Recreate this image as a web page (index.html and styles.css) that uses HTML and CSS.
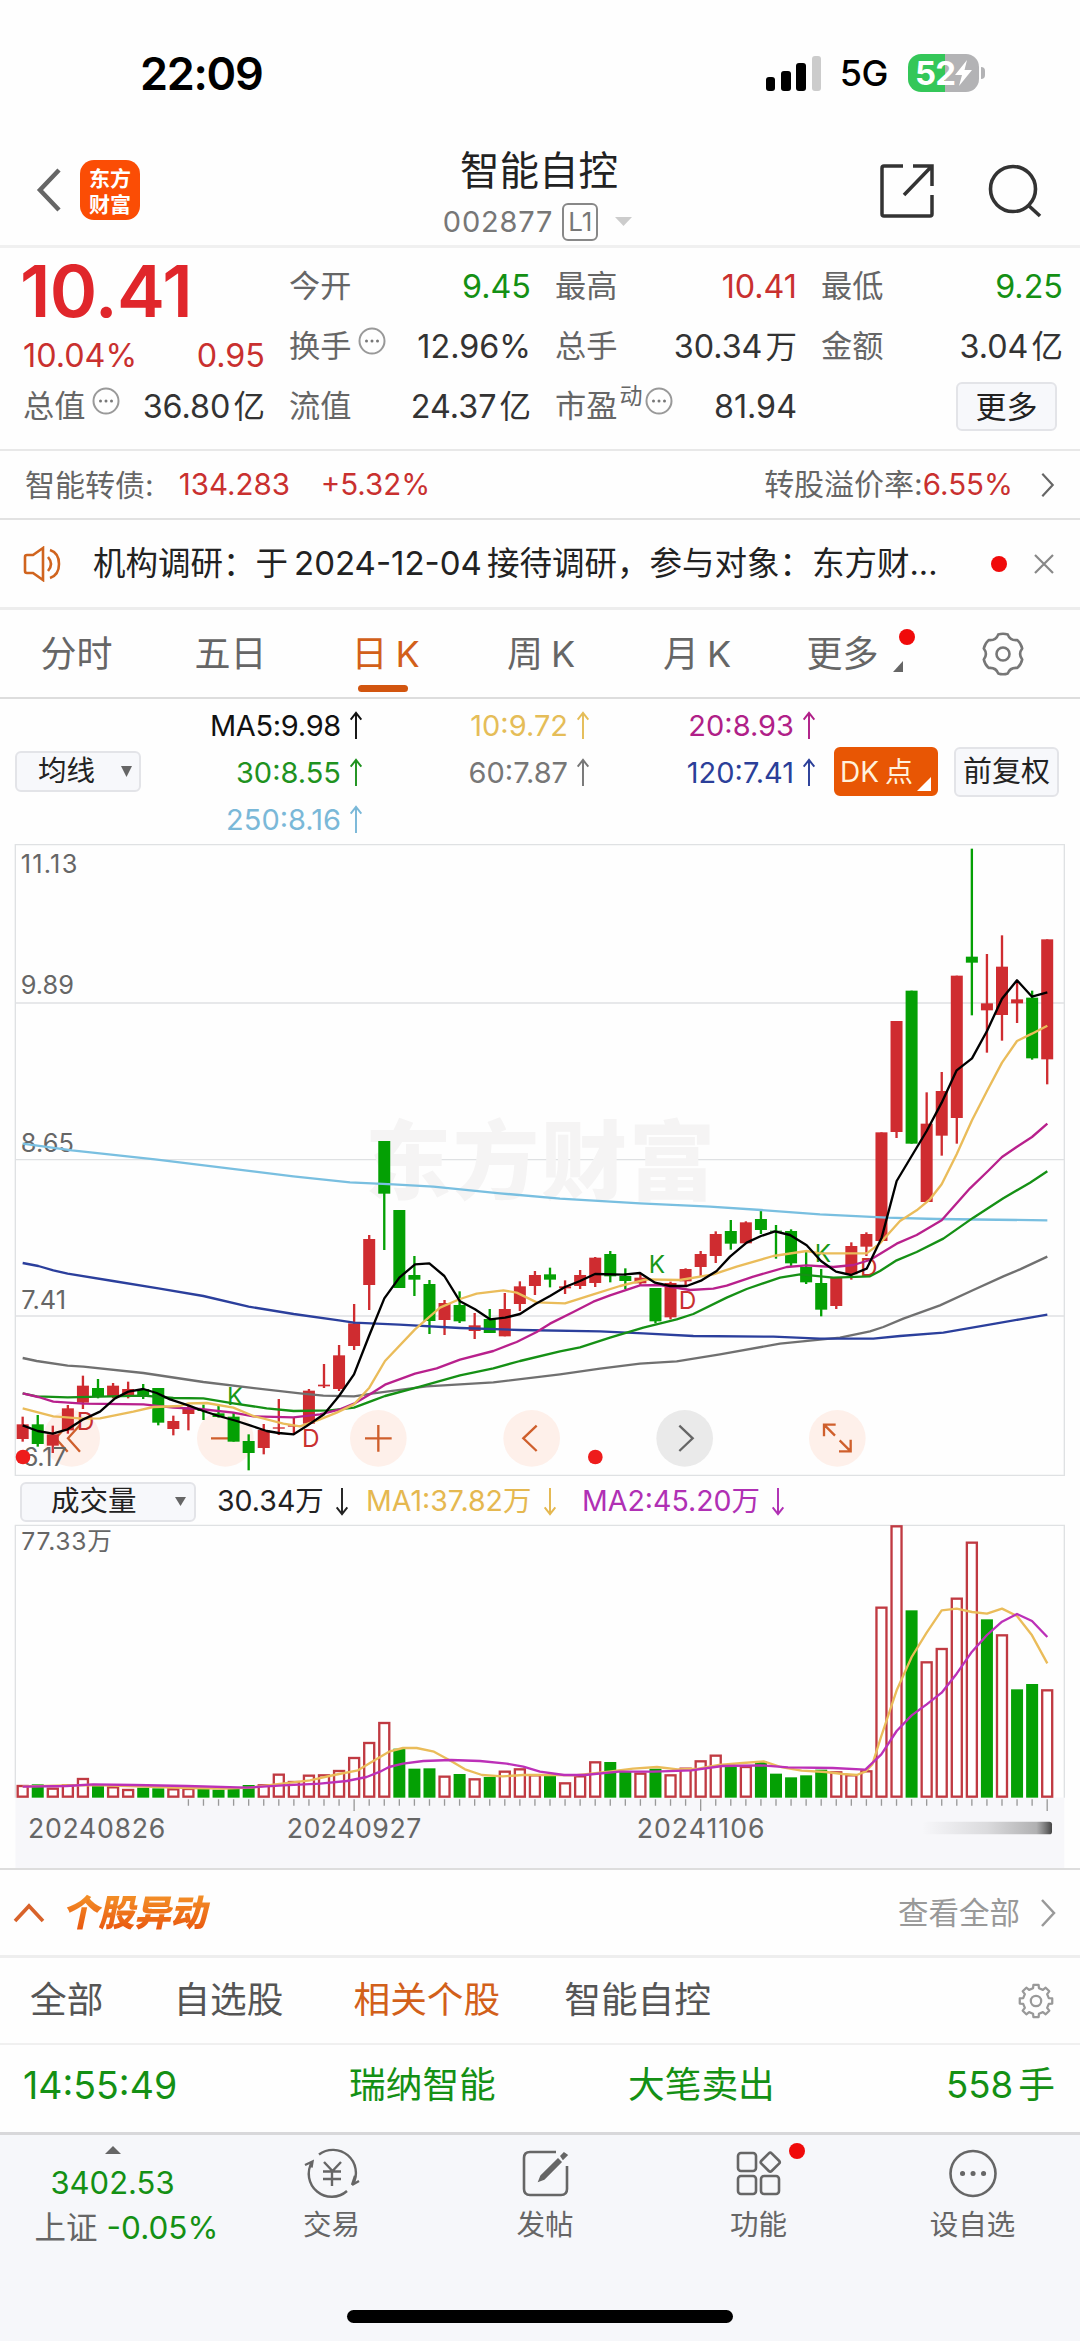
FILE: index.html
```html
<!DOCTYPE html>
<html lang="zh-CN">
<head>
<meta charset="utf-8">
<title>智能自控 002877</title>
<link rel="stylesheet" href="styles.css">
</head>
<body>
<svg class="defs" width="0" height="0">
  <symbol id="more" viewBox="0 0 28 28"><circle cx="14" cy="14" r="12.5" fill="none" stroke="#999" stroke-width="2"/><circle cx="8.5" cy="14" r="1.5" fill="#777"/><circle cx="14" cy="14" r="1.5" fill="#777"/><circle cx="19.500" cy="14" r="1.5" fill="#777"/></symbol>
  <symbol id="up" viewBox="0 0 14 30"><path d="M7 29V2M1.500 9L7 2l5.500 7" fill="none" stroke="currentColor" stroke-width="2"/></symbol>
  <symbol id="down" viewBox="0 0 14 30"><path d="M7 1v27M1.500 21L7 28l5.500-7" fill="none" stroke="currentColor" stroke-width="2"/></symbol>
  <symbol id="tri" viewBox="0 0 12 10"><path d="M0 0h12L6 10z" fill="currentColor"/></symbol>
  <symbol id="right" viewBox="0 0 16 30"><path d="M2 2l12 13L2 28" fill="none" stroke="currentColor" stroke-width="2.500"/></symbol>
  <symbol id="gear" viewBox="0 0 44 44"><g fill="none" stroke="currentColor" stroke-width="2.600" stroke-linejoin="round"><path d="M17.200 2.600Q22 1 26.800 2.600Q29 8.800 36.400 8.100Q40.200 11.500 41.200 16.500Q37 22 41.200 27.500Q40.200 32.500 36.400 35.900Q29 35.200 26.800 41.400Q22 43 17.200 41.400Q15 35.200 7.600 35.900Q3.800 32.500 2.800 27.500Q7 22 2.800 16.500Q3.800 11.500 7.600 8.100Q15 8.800 17.200 2.600z"/><circle cx="22" cy="22" r="6.500"/></g></symbol>
  <symbol id="cog" viewBox="0 0 44 44"><g fill="none" stroke="currentColor" stroke-width="2.600" stroke-linejoin="round"><path d="M40.800 25L36.800 25.400 34.900 30 37.400 33.200 33.200 37.400 30 34.900 25.400 36.800 25 40.800H19L18.600 36.800 14 34.900 10.800 37.400 6.600 33.200 9.100 30 7.200 25.400 3.200 25V19L7.200 18.600 9.100 14 6.600 10.800 10.800 6.600 14 9.100 18.600 7.200 19 3.200H25L25.400 7.200 30 9.100 33.200 6.600 37.400 10.800 34.900 14 36.800 18.600 40.800 19z"/><circle cx="22" cy="22" r="6"/></g></symbol>
</svg>

<header class="status">
  <span class="time">22:09</span>
  <svg class="signal" width="56" height="35"><rect y="21" width="9" height="14" rx="3"/><rect x="15" y="15" width="10" height="20" rx="3"/><rect x="30" y="7" width="10" height="28" rx="3"/><rect x="46" y="0" width="9" height="35" rx="3" fill="#ccc"/></svg>
  <span class="net">5G</span>
  <div class="battery"><span>52</span><svg width="17" height="26" viewBox="0 0 17 26"><path d="M12 0L0 15h7L4 26 17 10H9.500z" fill="#fff"/></svg></div><i class="nub"></i>
</header>

<nav class="titlebar">
  <svg class="back" width="26" height="46"><path d="M23 3L4 23l19 20" fill="none" stroke="#666" stroke-width="4.500"/></svg>
  <div class="logo"><span>东方</span><span>财富</span></div>
  <div class="title">
    <h1>智能自控</h1>
    <div class="code"><span>002877</span><b>L1</b><svg width="17" height="9" viewBox="0 0 12 10" preserveAspectRatio="none"><use href="#tri"/></svg></div>
  </div>
  <svg class="share" width="54" height="54" fill="none" stroke="#333" stroke-width="3.500"><path d="M23 2H4q-2 0-2 2v46q0 2 2 2h46q2 0 2-2V31M33 2h19v20M24 31L51 3"/></svg>
  <svg class="search" width="54" height="54" fill="none" stroke="#333" stroke-width="3.600"><circle cx="25" cy="25" r="22.500"/><path d="M40 41l12 11"/></svg>
</nav>

<section class="quote">
  <div class="col">
    <div class="price">10.41</div>
    <div class="row red chg"><span>10.04%</span><span>0.95</span></div>
    <div class="row"><label>总值<svg class="dots"><use href="#more"/></svg></label><span>36.80<em>亿</em></span></div>
  </div>
  <div class="col">
    <div class="row"><label>今开</label><span class="green">9.45</span></div>
    <div class="row"><label>换手<svg class="dots"><use href="#more"/></svg></label><span>12.96%</span></div>
    <div class="row"><label>流值</label><span>24.37<em>亿</em></span></div>
  </div>
  <div class="col">
    <div class="row"><label>最高</label><span class="red">10.41</span></div>
    <div class="row"><label>总手</label><span>30.34<em>万</em></span></div>
    <div class="row"><label>市盈<sup>动</sup><svg class="dots tight"><use href="#more"/></svg></label><span>81.94</span></div>
  </div>
  <div class="col">
    <div class="row"><label>最低</label><span class="green">9.25</span></div>
    <div class="row"><label>金额</label><span>3.04<em>亿</em></span></div>
    <div class="row end"><button class="morebtn">更多</button></div>
  </div>
</section>

<section class="bond">
  <span class="nm">智能转债:</span><span class="red v1">134.283</span><span class="red v2">+5.32%</span>
  <span class="rate">转股溢价率:<b>6.55%</b></span>
  <svg width="15" height="26"><use href="#right"/></svg>
</section>

<section class="news">
  <svg width="44" height="36" fill="none" stroke="#d0641e" stroke-width="2.600"><path d="M20 2L10 9H4q-2 0-2 2v14q0 2 2 2h6l10 7zM25 11q6 7 0 14M27 4q9 3 9 14t-9 14"/></svg>
  <p>机构调研：于<span class="date">2024-12-04</span>接待调研，参与对象：东方财...</p>
  <i class="dot"></i>
  <svg class="x" width="20" height="20"><path d="M1 1l18 18M19 1L1 19" stroke="#888" stroke-width="2.200"/></svg>
</section>

<nav class="tabs">
  <span>分时</span><span>五日</span><span class="on">日<i>K</i></span><span>周<i>K</i></span><span>月<i>K</i></span>
  <span class="more">更多<svg width="10" height="11"><path d="M10 0v11H0z" fill="#666"/></svg><u class="dot"></u></span>
  <svg class="gear" width="44" height="44"><use href="#gear"/></svg>
</nav>

<section class="ma">
  <button class="select">均线<svg width="11" height="11" viewBox="0 0 12 10" preserveAspectRatio="none"><use href="#tri"/></svg></button>
  <div class="values">
    <span class="c5">MA5:9.98<svg><use href="#up"/></svg></span><span class="c10">10:9.72<svg><use href="#up"/></svg></span><span class="c20">20:8.93<svg><use href="#up"/></svg></span>
    <span class="c30">30:8.55<svg><use href="#up"/></svg></span><span class="c60">60:7.87<svg><use href="#up"/></svg></span><span class="c120">120:7.41<svg><use href="#up"/></svg></span>
    <span class="c250">250:8.16<svg><use href="#up"/></svg></span>
  </div>
  <button class="dk">DK 点<svg width="14" height="14"><path d="M14 0v14H0z" fill="#fff"/></svg></button>
  <button class="fq">前复权</button>
</section>

<svg class="kchart" viewBox="0 -951 3240 1899" width="1080" height="633">
  <g class="grid"><path d="M46-949H3193V943H46zM46-474H3193M46-4H3193M46 465H3193"/></g>
  <text class="watermark" x="1095" y="95" textLength="1050">东方财富</text>
  <g class="tools">
    <circle cx="215" cy="832" r="85"/><circle cx="676" cy="832" r="85"/><circle cx="1135" cy="832" r="85"/><circle cx="1595" cy="832" r="85"/><circle class="next" cx="2054" cy="832" r="85"/><circle cx="2512" cy="832" r="85"/>
    <path d="M203 792l-36 40 36 40M240 792l-36 40 36 40M633 832h84M1095 832h80M1135 792v80M1610 794l-40 38 40 38M2505 824l-33-33M2472 826v-35h35M2519 838l33 33M2552 836v35h-35"/>
    <path class="nextp" d="M2038 794l40 38-40 38"/>
  </g>
  <g id="candles"></g>
  <g class="axis">
    <text x="62" y="-865" textLength="170">11.13</text><text x="62" y="-500" textLength="160">9.89</text><text x="62" y="-28" textLength="160">8.65</text><text x="64" y="443" textLength="134">7.41</text><text x="68" y="914" textLength="132">6.17</text>
  </g>
  <g class="marks">
    <text class="k" x="681" y="733">K</text><text class="d" x="230" y="808">D</text><text class="d" x="906" y="859">D</text>
    <text class="k" x="1946" y="336">K</text><text class="d" x="2036" y="443">D</text><text class="k" x="2444" y="302">K</text><text class="d" x="2580" y="346">D</text>
  </g>
  <g class="lines">
    <polyline class="l250" points="68,-52 216,-32 465,-5 765,32 880,46 1050,64 1180,70 1300,77 1500,97 1680,113 1920,127 2130,137 2283,147 2460,160 2660,170 2810,174 3142,178"/>
    <polyline class="l60" points="68,591 110,600 203,614 250,617 430,636 610,663 750,680 900,697 970,704 1062,706 1120,697 1280,676 1480,664 1680,640 1800,623 1920,608 2030,601 2160,580 2340,548 2520,530 2610,511 2650,498 2710,473 2820,433 2920,387 3010,346 3060,325 3142,287"/>
    <polyline class="l120" points="68,306 115,315 160,328 203,338 339,360 475,382 610,405 746,437 881,459 1017,478 1062,485 1198,491 1380,501 1560,507 1800,511 1930,517 2080,525 2320,527 2460,533 2620,533 2700,525 2830,515 2990,487 3060,475 3142,461"/>
    <polyline class="l30" points="68,697 110,706 203,709 430,704 520,711 610,712 700,727 800,742 881,750 990,748 1062,740 1120,718 1155,705 1260,677 1380,643 1480,622 1560,600 1680,571 1740,559 1830,530 1930,500 2030,475 2080,459 2180,410 2240,384 2340,350 2400,340 2500,350 2610,346 2640,330 2690,298 2750,273 2830,233 2920,170 3010,112 3090,65 3142,31"/>
    <polyline class="l20" points="68,697 115,708 160,722 250,728 430,730 520,740 600,744 700,755 760,766 880,769 960,760 1020,745 1062,728 1110,700 1155,671 1245,638 1310,622 1380,596 1480,570 1550,543 1610,513 1650,488 1720,453 1780,422 1830,403 1920,373 1980,372 2070,387 2140,383 2180,374 2260,347 2360,318 2420,313 2500,318 2560,312 2610,297 2690,248 2750,222 2825,178 2910,82 2964,30 3006,-12 3051,-43 3096,-72 3142,-112"/>
    <polyline class="l10" points="68,742 160,766 250,773 300,772 400,752 460,738 540,735 565,727 620,726 700,740 760,765 850,788 900,796 960,775 1010,755 1062,730 1108,680 1155,600 1245,505 1320,440 1380,414 1430,398 1510,388 1550,395 1610,424 1695,427 1780,400 1860,375 1940,355 2040,357 2140,340 2210,317 2320,285 2420,270 2460,277 2600,277 2640,247 2700,180 2750,148 2790,115 2825,70 2870,-20 2916,-122 2961,-210 3006,-295 3051,-360 3096,-382 3142,-406"/>
    <polyline class="l5" points="68,793 113,810 158,818 203,805 250,775 300,752 345,712 385,692 430,684 470,696 510,715 565,733 610,750 656,765 710,780 750,793 800,810 836,816 881,820 920,795 972,760 1017,705 1062,640 1107,525 1153,412 1198,350 1245,310 1288,307 1333,345 1380,421 1425,445 1470,475 1515,470 1560,459 1605,430 1650,405 1695,378 1740,360 1785,339 1870,341 1920,336 1965,365 2010,375 2060,375 2105,358 2150,330 2190,287 2240,245 2283,225 2325,211 2370,222 2420,253 2463,300 2508,332 2553,342 2600,323 2645,230 2690,60 2735,-15 2780,-90 2825,-175 2870,-272 2916,-308 2961,-390 3006,-487 3051,-542 3096,-493 3142,-506"/>
  </g>
  <circle class="reddot" cx="69" cy="888" r="22"/><circle class="reddot" cx="1786" cy="888" r="22"/>
</svg>

<section class="volhead">
  <button class="select wide">成交量<svg width="11" height="9" viewBox="0 0 12 10" preserveAspectRatio="none"><use href="#tri"/></svg></button>
  <span class="v0">30.34万<svg><use href="#down"/></svg></span><span class="v1">MA1:37.82万<svg><use href="#down"/></svg></span><span class="v2">MA2:45.20万<svg><use href="#down"/></svg></span>
</section>

<svg class="vchart" viewBox="0 63 3240 1039" width="1080" height="346.330">
  <defs><linearGradient id="fade"><stop offset="0" stop-color="#777" stop-opacity="0"/><stop offset=".5" stop-color="#777" stop-opacity=".22"/><stop offset=".88" stop-color="#777" stop-opacity=".55"/><stop offset="1" stop-color="#444"/></linearGradient></defs>
  <rect x="46" y="890" width="3147" height="212" fill="#f7f7fa"/>
  <g class="grid"><path d="M46 890V73H3193V890"/></g>
  <text class="vtop" x="64" y="147" textLength="272">77.33万</text>
  <g id="bars"></g>
  <g class="lines">
    <polyline class="m1" points="68,856 196,853 279,852 413,856 568,861 671,863 754,860 826,850 930,838 1002,822 1074,808 1116,782 1167,752 1209,741 1250,741 1302,752 1353,780 1395,805 1446,822 1508,826 1570,822 1672,822 1723,823 1827,812 1899,803 1971,798 2033,805 2095,803 2157,792 2229,786 2291,781 2343,798 2405,809 2477,813 2529,819 2570,822 2596,812 2617,790 2644,705 2690,568 2735,468 2780,395 2825,328 2870,323 2916,333 2961,338 3006,323 3051,345 3096,403 3142,487"/>
    <polyline class="m2" points="68,857 200,855 280,850 400,852 560,855 740,860 850,853 960,848 1040,840 1100,828 1140,812 1167,798 1209,788 1270,780 1353,777 1440,780 1520,788 1570,797 1620,812 1692,822 1754,822 1857,812 1961,812 2074,808 2167,795 2281,793 2364,799 2498,801 2596,806 2644,760 2690,690 2735,643 2780,610 2825,575 2870,518 2916,452 2961,402 3006,362 3051,339 3096,360 3142,408"/>
  </g>
  <path id="ticks" stroke="#999" stroke-width="4"/>
  <g class="dates"><text x="84" y="1010" textLength="412">20240826</text><text x="860" y="1010" textLength="404">20240927</text><text x="1910" y="1010" textLength="384">20241106</text></g>
  <rect x="2766" y="962" width="390" height="38" rx="8" fill="url(#fade)"/>
</svg>

<section class="moves">
  <svg width="32" height="20"><path d="M2 18L16 3l14 15" fill="none" stroke="#d8622a" stroke-width="3.600"/></svg>
  <h2>个股异动</h2>
  <span class="all">查看全部</span>
  <svg class="go" width="16" height="30"><use href="#right"/></svg>
</section>
<nav class="filters">
  <span>全部</span><span>自选股</span><span class="on">相关个股</span><span>智能自控</span>
  <svg width="38" height="38"><use href="#cog"/></svg>
</nav>
<section class="event"><span>14:55:49</span><span>瑞纳智能</span><span>大笔卖出</span><span>558<em>手</em></span></section>

<footer>
  <div class="items">
    <div class="index"><svg width="16" height="8"><path d="M0 8L8 0l8 8z" fill="#666"/></svg><b>3402.53</b><p>上证<span>-0.05%</span></p></div>
    <div class="item"><svg width="56" height="52" fill="none" stroke="#666" stroke-width="2.400"><path d="M15 6.500A23 23 0 0 1 49 36M48 37l7-4M48 37l3-9M8 14A23 23 0 0 0 43 43M1 17l7.500-3.500-1 6M20 14l8.500 9 8.500-9M19 23.500h18M19 31h18M28 23v15"/></svg>交易</div>
    <div class="item"><svg width="50" height="52" fill="none" stroke="#666" stroke-width="2.600"><path d="M36 4H10q-6 0-6 6v31q0 6 6 6h31q6 0 6-6V18"/><path d="M19 33l2-5 17-17 3 3-17 17zM41 8l3-3 3 2-4 4z" fill="#666" stroke-width="1.500"/></svg>发帖</div>
    <div class="item"><svg width="50" height="52" fill="none" stroke="#666" stroke-width="2.600"><rect x="4" y="5" width="18" height="18" rx="3"/><rect x="4" y="28" width="18" height="18" rx="3"/><rect x="27" y="28" width="18" height="18" rx="3"/><rect x="29" y="7" width="14.500" height="14.500" rx="2" transform="rotate(45 36.300 14.200)"/></svg><u class="dot"></u>功能</div>
    <div class="item"><svg width="50" height="52" fill="none" stroke="#666" stroke-width="2.600"><circle cx="25" cy="25.500" r="22.500"/><path d="M14.500 25.500h.1M25 25.500h.1M35.500 25.500h.1" stroke-width="5" stroke-linecap="round"/></svg>设自选</div>
  </div>
  <div class="home"></div>
</footer>
<script src="chart.js"></script>
</body>
</html>
```
FILE: styles.css
```css
* { box-sizing: border-box; }
body { margin: 0; width: 1080px; height: 2341px; background: #fefefe; color: #333; font: 31px/1 Inter, "Noto Sans CJK SC", sans-serif; display: flex; flex-direction: column; overflow: hidden; }
body > * { flex: none; }
h1, h2, p { margin: 0; font-weight: 400; }
i, em, u { font-style: normal; text-decoration: none; }
b { font-weight: 400; }
svg { display: block; flex: none; }
span, label, p { white-space: nowrap; }
button { font: inherit; color: #222; padding: 0; border: 2px solid #e3e4e8; border-radius: 6px; background: #f7f8fb; display: flex; align-items: center; white-space: nowrap; }
.defs { position: absolute; }
.red { color: #c9302f; }
.green { color: #149014; }
.dot { width: 16px; height: 16px; border-radius: 50%; background: #f00a0a; display: block; flex: none; }

.status { height: 146px; padding: 0 95px 0 140px; display: flex; align-items: center; color: #000; }
.time { font-size: 45px; font-weight: 600; letter-spacing: -1.300px; margin-right: auto; }
.signal { margin-right: 18px; }
.net { font-size: 36px; font-weight: 500; letter-spacing: -0.500px; margin-right: 20px; }
.battery { width: 71px; height: 38px; border-radius: 13px; background: linear-gradient(90deg, #34c759 37px, #b3b3b5 37px); color: #fff; font-size: 33px; font-weight: 700; letter-spacing: -1px; display: flex; align-items: center; justify-content: center; }
.nub { width: 4px; height: 12px; margin-left: 2px; border-radius: 0 4px 4px 0; background: #b3b3b5; }

.titlebar { height: 102px; padding-left: 36px; display: flex; align-items: center; border-bottom: 3px solid #f0f0f0; }
.titlebar > * { margin-top: -12px; }
.back { margin-top: -12px; }
.logo { width: 60px; height: 60px; margin-left: 18px; border-radius: 14px; background: #fb4d05; color: #fff; font: 700 21px/26px "Noto Sans CJK SC", sans-serif; display: flex; flex-direction: column; align-items: center; justify-content: center; }
.logo span { height: 26px; overflow: hidden; }
.title { width: 320px; margin-left: 239px; display: flex; flex-direction: column; align-items: center; height: 94px; margin-top: -2px; }
.title h1 { font-size: 39.500px; line-height: 46px; color: #222; }
.code { display: flex; align-items: center; font-size: 29px; color: #777; height: 40px; margin-top: 8px; letter-spacing: 0.800px; margin-left: -3px; }
.code b { width: 36px; height: 38px; margin: 0 17px 0 9px; border: 2px solid #888; border-radius: 6px; font-size: 26px; line-height: 34px; text-align: center; letter-spacing: 0; }
.code svg { color: #ccc; }
.share { margin-left: 181px; margin-top: -10px; }
.search { margin-left: 54px; margin-top: -10px; }

.quote { height: 203px; padding: 9px 16px 0 23px; display: grid; grid-template-columns: repeat(4, 242px); column-gap: 24px; border-bottom: 2px solid #e8e8e8; }
.row { height: 60px; display: flex; justify-content: space-between; align-items: center; }
.row > span { font-size: 32.300px; }
.row em { margin-left: 3px; font-size: 31.500px; }
.row label { color: #666; display: flex; align-items: center; font-size: 31.200px; }
.price { font-size: 72px; line-height: 68px; height: 69px; font-weight: 600; color: #e0262b; letter-spacing: -0.600px; margin-left: -3px; }
.chg { height: 60px; }
.col .chg + .row { height: 42px; }
.dots { width: 28px; height: 28px; margin: -12px 0 0 7px; }
.dots.tight { margin-left: 3px; }
sup { font-size: 23px; line-height: 23px; margin: -20px 0 0 2px; vertical-align: baseline; }
.row.end { justify-content: flex-end; }
.morebtn { width: 101px; height: 49px; justify-content: center; margin-right: 6px; font-size: 31px; margin-top: -2px; }

.bond { height: 69px; padding: 0 25px 0 25px; display: flex; align-items: center; font-size: 30px; color: #666; border-bottom: 2px solid #e2e2e2; }
.bond .red { font-size: 29.500px; }
.bond .v1 { margin-left: 25px; width: 117px; }
.bond .v2 { margin-left: 25px; }
.rate { margin-left: auto; margin-right: 27px; }
.rate b { color: #c9302f; font-size: 29.500px; }
.bond svg { color: #666; }

.news { height: 90px; padding: 0 26px 0 23px; display: flex; align-items: center; border-bottom: 3px solid #ededed; color: #222; }
.news p { font-size: 32.500px; margin-left: 26px; width: 842px; }
.news .date { margin: 0 5px 0 6px; font-size: 33px; }
.news .dot { margin-left: 56px; }
.news .x { margin-left: auto; }

.tabs { height: 89px; display: grid; grid-template-columns: 153px 155px 155px 156px 156px 145px 1fr; align-items: center; color: #666; font-size: 36px; border-bottom: 2px solid #ddd; }
.tabs span { justify-self: center; position: relative; }
.tabs i { margin-left: 8px; }
.tabs .on { color: #d2601a; }
.tabs .on::after { content: ""; position: absolute; left: 50%; bottom: -20px; width: 50px; height: 7px; margin-left: -27px; border-radius: 4px; background: #d2550f; }
.tabs .more { display: flex; align-items: flex-end; gap: 14px; }
.tabs .more svg { margin-right: -14px; }
.tabs .more .dot { position: absolute; right: -26px; top: -7px; }
.gear { color: #777; margin-left: 61px; }

.ma { height: 145px; padding: 0 21px 0 15px; display: flex; align-items: center; }
.select { width: 126px; height: 41px; padding-left: 21px; font-size: 28.500px; color: #222; }
.select svg { margin-left: auto; margin-right: 7px; color: #666; }
.values { display: grid; grid-template-columns: 222px 227px 226px; grid-auto-rows: 47px; font-size: 29px; width: 675px; margin-top: 1px; }
.values span { display: flex; align-items: center; justify-content: flex-end; }
.values svg, .volhead span svg { width: 14px; height: 29px; margin-left: 8px; }
.c5 { color: #111; letter-spacing: -0.300px; } .c10 { color: #e5bd58; } .c20 { color: #b01f88; } .c30 { color: #1f921f; } .c60 { color: #777; } .c120 { color: #2b3f99; } .c250 { color: #7ab8d8; }
.dk { width: 104px; height: 49px; margin-left: 18px; background: #e85604; border-color: #e85604; color: #fff1dc; font-size: 28px; padding-left: 4px; position: relative; word-spacing: -2px; }
.dk svg { position: absolute; right: 5px; bottom: 3px; }
.fq { width: 105px; height: 50px; margin-left: auto; font-size: 29px; justify-content: center; }

.kchart, .vchart { font-family: Inter, "Noto Sans CJK SC", sans-serif; }
.grid path { fill: none; stroke: #dfe1e3; stroke-width: 4; }
.watermark { font-size: 258px; font-weight: 900; fill: #f5f4f4; }
.axis text { font-size: 76px; fill: #666; }
.vtop { font-size: 74px; fill: #666; }
.dates text { font-size: 80px; fill: #666; }
.tools circle { fill: #fef0ea; }
.tools .next { fill: #eaeaea; }
.tools path { fill: none; stroke: #cf5f2c; stroke-width: 7; }
.tools .nextp { stroke: #666; }
.marks text { font-size: 73px; }
.k { fill: #189818; } .d { fill: #c9302f; }
.lines polyline { fill: none; stroke-width: 7; stroke-linejoin: round; }
.l5 { stroke: #000; } .l10 { stroke: #eabc5a; } .l20 { stroke: #b8208c; } .l30 { stroke: #159015; } .l60 { stroke: #707070; } .l120 { stroke: #2b3f9c; } .l250 { stroke: #79bfe0; }
.m1 { stroke: #eabc5a; } .m2 { stroke: #bc30b8; }
.reddot { fill: #ee1c1c; }
.up { fill: #cf2c30; } .dn { fill: #04a004; }
.hollow { fill: #fff; stroke: #c03a42; stroke-width: 7; }

.volhead { height: 45px; padding: 4px 0 0 20px; display: flex; align-items: center; font-size: 28.500px; }
.wide { width: 176px; height: 40px; padding-left: 29px; }
.volhead .select svg { margin-right: 8px; }
.volhead span { display: flex; align-items: center; }
.volhead span svg { margin-left: 11px; }
.v0 { margin-left: 21px; color: #222; width: 149px; } .volhead .v1 { color: #e5b850; width: 216px; } .volhead .v2 { color: #b030b4; }

.moves { height: 90px; padding: 0 24px 0 13px; display: flex; align-items: center; border-top: 2px solid #ddd; border-bottom: 3px solid #eee; }
.moves h2 { font-size: 36.500px; line-height: 44px; font-weight: 900; letter-spacing: -0.500px; margin-left: 20px; transform: skewX(-12deg); background: linear-gradient(#f4962a, #e8500c); background-clip: text; color: transparent; }
.all { margin-left: auto; color: #999; font-size: 30.500px; }
.go { margin-left: 20px; color: #999; }
.filters { height: 87px; padding: 0 25px 0 30px; display: flex; align-items: center; font-size: 36.700px; color: #555; border-bottom: 2px solid #f0f0f0; }
.filters span + span { margin-left: 70px; }
.filters .on + span { margin-left: 64px !important; }
.filters .on { color: #d2601a; }
.filters svg { margin-left: auto; color: #999; }
.event { height: 90px; padding: 0 25px 7px 23px; display: flex; align-items: center; font-size: 36.700px; color: #149014; border-bottom: 3px solid #d8d8da; }
.event span:nth-child(1) { width: 326px; font-size: 37.500px; }
.event span:nth-child(2) { width: 279px; }
.event span:nth-child(4) { margin-left: auto; }
.event em { margin-left: 5px; }

footer { height: 208px; background: #f6f7fa; display: flex; flex-direction: column; justify-content: space-between; align-items: center; padding-bottom: 20px; }
.items { display: grid; grid-template-columns: 225px 213px 214px 213px 215px; width: 1080px; color: #666; }
.item { display: flex; flex-direction: column; align-items: center; font-size: 28.500px; line-height: 36px; padding-top: 13px; gap: 7px; position: relative; }
.item .dot { position: absolute; top: 8px; left: 137px; }
.index { display: flex; flex-direction: column; align-items: center; padding-top: 11px; }
.index b { font-size: 31px; line-height: 40px; margin-top: 9px; color: #149014; }
.index p { line-height: 40px; font-size: 31.500px; margin: 5px 0 0 28px; }
.index p span { color: #149014; margin-left: 9px; }
.home { width: 386px; height: 13px; border-radius: 7px; background: #000; }
```
FILE: chart.js
```js
// One row per trading day: [direction, high, body top, body bottom, low, volume top]
// Direction: 1 = up (red), 0 = down (green). Chart units, three per CSS pixel.
const days = [
  [1,767,790,834,842,854],[0,762,790,849,857,850],[1,794,820,854,876,862],[1,732,742,808,818,852],[1,644,674,725,744,833],
  [0,654,681,708,712,855],[1,666,674,706,712,858],[1,662,684,702,712,866],[0,669,684,704,714,860],[0,681,681,785,793,862],
  [1,764,780,804,823,864],[1,735,740,759,808,863],[0,731,744,750,777,864],[0,730,757,768,770,866],[0,755,767,842,842,863],
  [0,820,840,876,928,852],[1,789,807,861,880,852],[1,714,799,803,822,820],[1,768,793,797,818,842],[1,684,689,788,790,823],
  [1,609,671,676,681,822],[1,552,583,684,690,809],[1,429,487,555,567,770],[1,222,234,372,447,725],[0,-60,-60,98,267,665],
  [0,147,147,381,381,743],[0,285,342,356,405,803],[0,357,369,480,519,802],[1,417,426,477,522,826],[0,391,432,481,486,819],
  [1,456,493,510,534,834],[0,444,474,516,516,828],[1,396,444,526,526,811],[1,361,376,429,450,804],[1,330,342,375,402,822],
  [0,320,340,356,379,823],[1,358,376,382,399,846],[1,327,342,375,384,825],[1,288,290,366,378,783],[0,270,279,346,364,783],
  [0,322,345,360,384,813],[1,336,350,367,372,817],[0,381,381,481,487,803],[1,362,366,469,475,822],[1,322,324,361,374,802],
  [1,270,279,318,345,780],[1,211,219,285,306,763],[0,177,210,248,266,795],[1,181,184,247,249,797],[0,150,174,207,219,781],
  [0,192,209,212,293,818],[0,205,210,307,315,829],[0,270,318,364,369,823],[0,324,366,446,466,806],[1,348,350,435,444,813],
  [1,244,255,340,356,822],[1,214,219,257,285,810],[1,-86,-86,240,242,319],[1,-420,-420,-87,-69,75],[0,-511,-511,-52,-52,328],
  [1,-206,-112,123,123,483],[1,-267,-210,-76,-16,443],[1,-556,-556,-129,-52,292],[0,-937,-613,-595,-437,124],[1,-621,-473,-452,-325,355],
  [1,-677,-583,-438,-361,402],[1,-542,-485,-473,-414,565],[0,-511,-490,-308,-304,549],[1,-665,-665,-305,-230,567]
];
// Days whose volume bar colour differs from the candle colour.
const volumeUp = { 24: 1, 63: 1, 64: 0, 66: 0 };
const longTicks = [22, 45, 68];
let candles = "", bars = "", ticks = "";
days.forEach(([up, high, top, bottom, low, vol], i) => {
  const x = 68 + i * 45.2;
  const cls = up ? "up" : "dn";
  candles += `<rect class="${cls}" x="${x - 3.5}" y="${high}" width="7" height="${low - high}"/>`;
  candles += `<rect class="${cls}" x="${x - 18}" y="${top}" width="36" height="${bottom - top}"/>`;
  const vUp = i in volumeUp ? volumeUp[i] : up;
  bars += vUp
    ? `<rect class="hollow" x="${x - 15}" y="${vol + 1}" width="30" height="${886 - vol}"/>`
    : `<rect class="dn" x="${x - 18}" y="${vol}" width="36" height="${890 - vol}"/>`;
  if (i > 10) ticks += `M${x} 895V${longTicks.includes(i) ? 930 : 914}`;
});
document.getElementById("candles").innerHTML = candles;
document.getElementById("bars").innerHTML = bars;
document.getElementById("ticks").setAttribute("d", ticks);
```
